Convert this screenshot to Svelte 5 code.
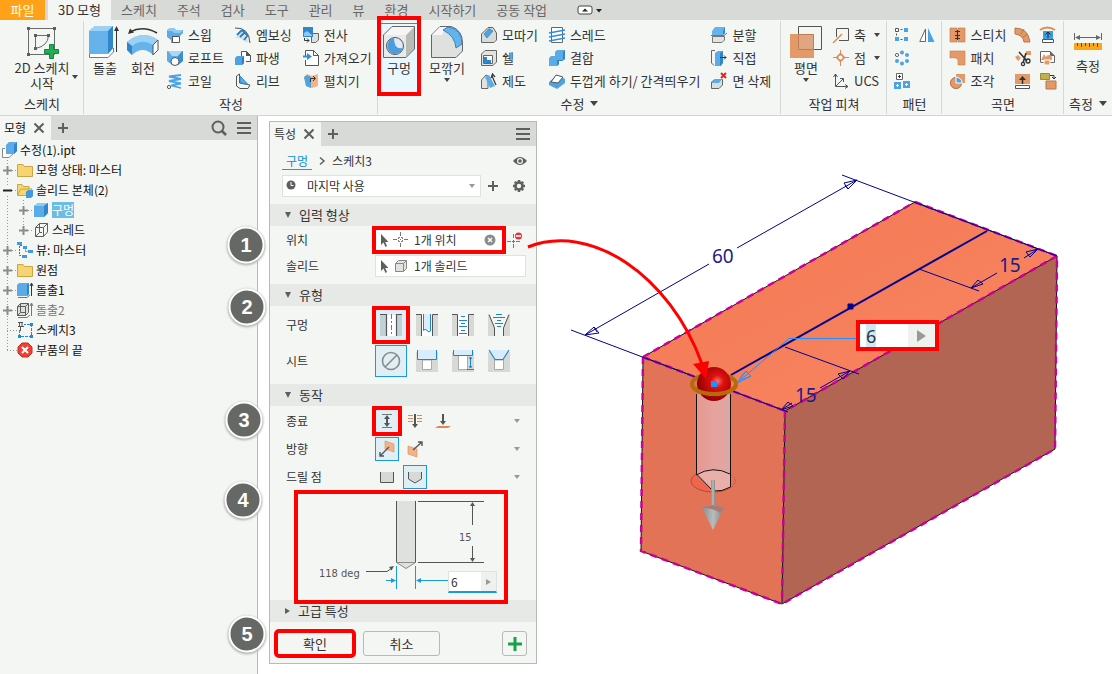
<script lang="ts">
	type Tool = { icon: string; label?: string; name?: string; menu?: boolean };
	type Panel = {
		id: string;
		title: string;
		menu?: boolean;
		large: (Tool & { marked?: boolean })[];
		columns: Tool[][];
	};
	type Node = {
		icon: string;
		label: string;
		toggle?: "plus" | "minus";
		selected?: boolean;
		muted?: boolean;
		children?: Node[];
	};

	const tabs = ["스케치", "주석", "검사", "도구", "관리", "뷰", "환경", "시작하기", "공동 작업"];

	const panels: Panel[] = [
		{
			id: "sketch",
			title: "스케치",
			large: [{ icon: "sketch", label: "2D 스케치\n시작", menu: true }],
			columns: [],
		},
		{
			id: "create",
			title: "작성",
			large: [
				{ icon: "extrude", label: "돌출" },
				{ icon: "revolve", label: "회전" },
			],
			columns: [
				[
					{ icon: "sweep", label: "스윕" },
					{ icon: "loft", label: "로프트" },
					{ icon: "coil", label: "코일" },
				],
				[
					{ icon: "emboss", label: "엠보싱" },
					{ icon: "derive", label: "파생" },
					{ icon: "rib", label: "리브" },
				],
				[
					{ icon: "decal", label: "전사" },
					{ icon: "import", label: "가져오기" },
					{ icon: "unwrap", label: "펼치기" },
				],
			],
		},
		{
			id: "modify",
			title: "수정",
			menu: true,
			large: [
				{ icon: "hole", label: "구멍", marked: true },
				{ icon: "fillet", label: "모깎기", menu: true },
			],
			columns: [
				[
					{ icon: "chamfer", label: "모따기" },
					{ icon: "shell", label: "쉘" },
					{ icon: "draft", label: "제도" },
				],
				[
					{ icon: "thread", label: "스레드" },
					{ icon: "combine", label: "결합" },
					{ icon: "thicken", label: "두껍게 하기/ 간격띄우기" },
				],
				[
					{ icon: "split", label: "분할" },
					{ icon: "direct", label: "직접" },
					{ icon: "deleteFace", label: "면 삭제" },
				],
			],
		},
		{
			id: "work",
			title: "작업 피쳐",
			large: [{ icon: "plane", label: "평면", menu: true }],
			columns: [
				[
					{ icon: "axis", label: "축", menu: true },
					{ icon: "point", label: "점", menu: true },
					{ icon: "ucs", label: "UCS" },
				],
			],
		},
		{
			id: "pattern",
			title: "패턴",
			large: [],
			columns: [
				[
					{ icon: "rectPattern", name: "직사각형 패턴" },
					{ icon: "circPattern", name: "원형 패턴" },
					{ icon: "sketchPattern", name: "스케치 연계 패턴" },
				],
				[{ icon: "mirror", name: "미러" }],
			],
		},
		{
			id: "surface",
			title: "곡면",
			large: [],
			columns: [
				[
					{ icon: "stitch", label: "스티치" },
					{ icon: "patch", label: "패치" },
					{ icon: "sculpt", label: "조각" },
				],
				[
					{ icon: "ruled", name: "직선보간 곡면" },
					{ icon: "trim", name: "자르기" },
					{ icon: "extend", name: "연장" },
				],
				[
					{ icon: "replace", name: "면 대체" },
					{ icon: "repair", name: "본체 복구" },
					{ icon: "fit", name: "메쉬 면 맞춤" },
				],
			],
		},
		{
			id: "measure",
			title: "측정",
			menu: true,
			large: [{ icon: "measure", label: "측정" }],
			columns: [],
		},
	];

	const tree: Node[] = [
		{ icon: "folder", label: "모형 상태: 마스터", toggle: "plus" },
		{
			icon: "bodies",
			label: "솔리드 본체(2)",
			toggle: "minus",
			children: [
				{ icon: "solid", label: "구멍", toggle: "plus", selected: true },
				{ icon: "wire", label: "스레드", toggle: "plus" },
			],
		},
		{ icon: "views", label: "뷰: 마스터", toggle: "plus" },
		{ icon: "folder", label: "원점", toggle: "plus" },
		{ icon: "extrusion", label: "돌출1", toggle: "plus" },
		{ icon: "extrusionOff", label: "돌출2", toggle: "plus", muted: true },
		{ icon: "sketchNode", label: "스케치3" },
		{ icon: "end", label: "부품의 끝" },
	];

	const holeTypes = [
		{ icon: "simpleHole", name: "단순 구멍" },
		{ icon: "clearanceHole", name: "틈새 구멍" },
		{ icon: "tappedHole", name: "탭 구멍" },
		{ icon: "taperHole", name: "테이퍼 탭 구멍" },
	];
	const seats = [
		{ icon: "noSeat", name: "없음" },
		{ icon: "counterbore", name: "카운터보어" },
		{ icon: "spotface", name: "접촉 공간" },
		{ icon: "countersink", name: "카운터싱크" },
	];
	const behaviors = [
		{
			label: "종료",
			marked: true,
			options: [
				{ icon: "distance", name: "거리" },
				{ icon: "throughAll", name: "전체 관통" },
				{ icon: "toFace", name: "지정 면까지" },
			],
		},
		{
			label: "방향",
			options: [
				{ icon: "dirDefault", name: "기본값" },
				{ icon: "dirFlipped", name: "반전" },
			],
		},
		{
			label: "드릴 점",
			options: [
				{ icon: "flat", name: "플랫" },
				{ icon: "angle", name: "각도" },
			],
		},
	];

	const steps = [
		{ n: 1, x: 246, y: 129 },
		{ n: 2, x: 247, y: 191 },
		{ n: 3, x: 244, y: 304 },
		{ n: 4, x: 243, y: 384 },
		{ n: 5, x: 247, y: 518 },
	];

	let holeType = $state(0);
	let seat = $state(0);
	let picked = $state([0, 0, 1]);
	let diameter = $state("6");

	const cube = `<path d="M1 4 5 1H15V11L11 15H1Z" fill="#5aabe8"/><path d="M1 4 5 1H15L11 4Z" fill="#8fcaf5"/><path d="M11 4 15 1V11L11 15Z" fill="#2f86cb"/>`;
	const wire = `<path d="M2.500 5.500 6.500 1.500H14.500V10L10.500 14.500H2.500ZM2.500 5.500H10.500V14.500M10.500 5.500 14.500 1.500M6.500 1.500V10.500L2.500 14.500M6.500 10.500H9" fill="none" stroke="#5c5f5c"/>`;
	const folder = `<path d="M.5 2.500H6L7.500 4.500H15.500V14.500H.5Z" fill="#f6d571" stroke="#c9a545"/>`;
	const bore = `<path d="M0 1H7V22H0ZM16 1H22V22H16Z" fill="#d7d9d6"/>`;

	// 16 x 16 unless listed in `sizes`
	const icons: Record<string, string> = {
		sketch: `<path d="M2.500 2.500H28.500V28.500H2.500ZM9.500 22.500V9.500H22.500Q22 20 9.500 22.500" fill="none" stroke="#6a6c6a"/><path d="M1 1h3v3H1ZM27 1h3v3h-3ZM1 27h3v3H1ZM8 8h3v3H8ZM21 8h3v3h-3ZM8 21h3v3H8Z" fill="#5c5f5c"/><path d="M23.500 18.500h4v5h5v4h-5v5h-4v-5h-5v-4h5Z" fill="#1fb052" stroke="#0d8a3c"/>`,
		extrude: `<path d="M.5 27V31.500H19L24.500 26V22" fill="#fff" stroke="#777"/><path d="M0 5 6 0H24V22L19 28H0Z" fill="#66b3ec"/><path d="M0 5 6 0H24L19 5Z" fill="#9bd1f6"/><path d="M19 5 24 0V22L19 28Z" fill="#2f86cb"/><path d="M27.500 26V3" stroke="#333"/><path d="M27.500 0 25 5H30Z" fill="#333"/>`,
		revolve: `<path d="M0 16Q15 3 31 14V24L26 29Q16 19 5 29L0 24Z" fill="#66b3ec"/><path d="M0 16Q15 3 31 14L26 19Q15 12 5 20Z" fill="#9bd1f6"/><path d="M26 19 31 14V24L26 29Z" fill="#fff" stroke="#555"/><path d="M0 16 5 20V29L0 24Z" fill="#2f86cb"/><path d="M3 6Q16-1 30 7" fill="none" stroke="#333" stroke-width="1.500"/><path d="M1 8 3 2.500 7 6.500Z" fill="#333"/>`,
		sweep: `<path d="M0 3 3 1H7L9 3H16V6L13 9H11V16H4V13L0 10Z" fill="#5aabe8"/><path d="M0 4 3 1H7L9 3H16L13 6H7L5 4Z" fill="#8fcaf5"/><path d="M5.500 9.500H12.500V15.500H5.500Z" fill="#fff" stroke="#555"/>`,
		loft: `<path d="M0 1H16V11L11 15H5L0 11Z" fill="#5aabe8"/><path d="M1 1H15L11 6H5Z" fill="#a8d8f8"/><path d="M16 1V11L11 15V6Z" fill="#3a8fd0"/><circle cx="8" cy="11.500" r="4" fill="#fff" stroke="#555"/>`,
		coil: `<path d="M14 2 2 3.500 14 6 2 8 14 10.500 4 12.500 14 15" fill="none" stroke="#4ba3e3" stroke-width="1.800" stroke-linejoin="bevel"/><circle cx="2" cy="14" r="1.600" fill="#fff" stroke="#555"/>`,
		emboss: `<path d="M0 1Q14 0 15 16" fill="none" stroke="#555"/><path d="M0 11 8 4 14 15H10Q7 11 0 11Z" fill="#dfe1df"/><path d="M2 8 7 3M5 10 10 5M9 13 13 8M7 3 13 9" fill="none" stroke="#1c7fc8" stroke-width="1.800"/>`,
		derive: `<path d="M6.500 6V1.500H11.500L15.500 5.500V11.500H11" fill="#fff" stroke="#555"/><path d="M11 1V6H16Z" fill="#555"/><path d="M0 8 2 6H9V13L7 15H0Z" fill="#4ba3e3"/><path d="M7 8 9 6V13L7 15Z" fill="#2f7fc0"/>`,
		rib: `<path d="M1.500 3 4.500 1V10L15 12 13 15.500H5L1.500 13Z" fill="#f5f5f5" stroke="#555"/><path d="M5 3 13 11.500 5 9.500Z" fill="#5aabe8" stroke="#2f86cb"/>`,
		decal: `<path d="M8.500 6.500H15.500V13L12.500 15.500H8.500Z" fill="#dfe1df" stroke="#666"/><path d="M0 0H10V10H0Z" fill="#2f86cb"/><path d="M1 6 4 4 9 8V9H1Z" fill="#8fcaf5"/><path d="M1.500 11V13.500H6M4 11.500 6 13.500 4 15.500" fill="none" stroke="#333"/>`,
		import: `<path d="M2.500 6V.5H10.500L15.500 5.500V15.500H2.500V10" fill="#fff" stroke="#555"/><path d="M10.500 .5V5.500H15.500" fill="none" stroke="#555"/><path d="M0 5.500H4V3L9 6.500 4 10V7.500H0Z" fill="#2f8ee0"/>`,
		unwrap: `<path d="M1 4 4 1 9 3 15 1V13L9 15 3 13Z" fill="#f0b48a"/><path d="M1 4 4 2 8 4V15L3 13Z" fill="#4ba3e3"/><path d="M7.500 9V5.500H12M10 3 12.500 5.500 10 8" fill="none" stroke="#333"/>`,
		hole: `<path d="M1 9 9 1H31V23L23 31H1Z" fill="#e9eae8"/><path d="M23 9 31 1V23L23 31Z" fill="#b9bbb9"/><path d="M1 9 9 1H31L23 9Z" fill="#f5f5f4"/><path d="M.5 9 9 .5H31.500V23L23 31.500H.5Z" fill="none" stroke="#666"/><circle cx="12" cy="20" r="8.500" fill="#dcebf5" stroke="#555"/><path d="M6 15A8 8 0 1 0 20 22Q11 24 11 12Q7 12 6 15Z" fill="#4b9ddb"/>`,
		fillet: `<path d="M.5 9 9 .5H20Q31.500 4 31.500 17V25L25 31.500H.5Z" fill="#dfe1df" stroke="#666"/><path d="M1 9 9 1H15L11 9Z" fill="#f7f7f7"/><path d="M12 4 17 1Q31 3 31 18L25 22Q24 10 12 4Z" fill="#66b3ec" stroke="#2f86cb"/>`,
		chamfer: `<path d="M.5 7 7 .5H12L15.500 6V13L13 15.500H.5Z" fill="#d9dbd9" stroke="#666"/><path d="M3 7 8 1.500 12 4 6 11Z" fill="#4ba3e3" stroke="#2777b5" stroke-width=".6"/>`,
		shell: `<path d="M.5 4 4 .5H15.500V12L12 15.500H.5Z" fill="#e2e3e1" stroke="#666"/><path d="M2.500 5.500H11.500V13.500H2.500Z" fill="#fff" stroke="#666"/><path d="M3 7H6V10H10V13H3Z" fill="#2f86cb"/>`,
		draft: `<path d="M.5 15.500V7L5 2 7 3V15.500Z" fill="#e2e3e1" stroke="#666"/><path d="M4 4 8 2 14 13 9 15Z" fill="#5aabe8"/><path d="M11 3 15 12M10 5 11.500 1 14 4" fill="none" stroke="#333" stroke-width="1.200"/>`,
		thread: `<path d="M2.500 .5H13.500V15.500H2.500Z" fill="#fff" stroke="#666"/><path d="M0 6 16 3M0 10 16 7M0 14 16 11" stroke="#2f8ee0" stroke-width="1.400"/>`,
		combine: `<path d="M0 8 2 6H6V2L8 0H16V9L13 11H10V14L8 16H0Z" fill="#5aabe8"/><path d="M14 2 16 0V9L13 11H10V14L8 16V10H14Z" fill="#2f86cb"/>`,
		thicken: `<path d="M0 9 8 2 16 6V10L8 16 0 12Z" fill="#4ba3e3"/><path d="M2 9 7 2 14 4 9 10Z" fill="#fff" stroke="#555"/>`,
		split: `<path d="M1 4 4 0H14V6L12 8H1Z" fill="#66b3ec"/><path d="M12 4 14 0V6L12 8Z" fill="#2f86cb"/><path d="M1.500 9.500H13.500V13L11 15.500H1.500Z" fill="#e2e3e1" stroke="#777"/><path d="M0 8.500H13L16 6" fill="none" stroke="#1c8ee0"/>`,
		direct: `<path d="M4 .5H.5V13L3 15.500" fill="none" stroke="#666"/><path d="M4 3 7 1H12V13L10 16H4Z" fill="#5aabe8"/><path d="M9 3 12 1V13L9 16Z" fill="#2f86cb"/><path d="M9 7.500H15M13 5.500 15 7.500 13 9.500" fill="none" stroke="#333"/>`,
		deleteFace: `<path d="M.5 15.500V9L4 6.500H11.500V12L8 15.500Z" fill="#dcdedc" stroke="#666"/><path d="M1 9 4 6H11L8 10H1Z" fill="#5aabe8"/><path d="M10 0 15 5M15 0 10 5" stroke="#f0201c" stroke-width="2"/>`,
		plane: `<path d="M8.500 .5H31.500V23.500H8.500Z" fill="none" stroke="#555"/><path d="M0 8H24V32H0Z" fill="#e39a68"/><path d="M8.500 8.500H23.500V23.500H8.500Z" fill="#dfa681" stroke="#c07c50"/>`,
		axis: `<path d="M3.500 10V1.500H15.500V13.500H6" fill="none" stroke="#555"/><path d="M0 16 9 7" stroke="#e08a4e" stroke-width="1.500"/>`,
		point: `<path d="M7.500 0V16M0 7.500H16" stroke="#d98c5c"/><path d="M7.500 2.500 12.500 7.500 7.500 12.500 2.500 7.500Z" fill="#d98c5c"/><circle cx="7.500" cy="7.500" r="2" fill="#fff"/>`,
		ucs: `<path d="M2.500 1V13.500H15M3 13 10 6M.5 4 2.500 1 4.500 4M12 11.500 15 13.500 12 15.500M7 5.500H10.500V9" fill="none" stroke="#555"/>`,
		rectPattern: `<path d="M2.500 2.500H12.500M2.500 2.500V13.500M2.500 12.500H12" stroke="#555" stroke-dasharray="2" fill="none"/><path d="M1.500 1.500h3v3h-3Z" fill="#fff" stroke="#555"/><path d="M10 1h4v4h-4ZM10 10h4v4h-4ZM1 10h4v4H1Z" fill="#4ba3e3"/>`,
		circPattern: `<g fill="#4ba3e3"><circle cx="8" cy="2.500" r="2"/><circle cx="13" cy="5" r="2"/><circle cx="13" cy="11" r="2"/><circle cx="8" cy="13.500" r="2"/><circle cx="3" cy="11" r="2"/></g><circle cx="3" cy="5" r="1.600" fill="#fff" stroke="#666"/>`,
		sketchPattern: `<path d="M2.500 .5h6v6h-6Z" fill="#fff" stroke="#666"/><path d="M0 9h7v7H0ZM9 8h7v7H9Z" fill="#4ba3e3"/><path d="M5.500 2V5M4 3.500H7" stroke="#333"/><path d="M3.500 11v3M2 12.500h3M12.500 10v3M11 11.500h3" stroke="#fff"/>`,
		mirror: `<path d="M6.500 2V14.500H.8Z" fill="#fff" stroke="#666"/><path d="M9 1 15.500 15H9Z" fill="#4ba3e3"/>`,
		stitch: `<path d="M0 1H7V15H0ZM8 1H15V15H8Z" fill="#e39a68" stroke="#b9764a" stroke-width=".6"/><path d="M5 4.500H10M5 8.500H10M5 11.500H10M7.500 3V13" stroke="#333"/>`,
		patch: `<path d="M0 1H15V15H8V10Q7 7 0 8Z" fill="#e39a68" stroke="#c07c50" stroke-width=".6"/>`,
		sculpt: `<path d="M6 1H15V10H12A6 6 0 1 1 6 4Z" fill="#e39a68"/><circle cx="6" cy="10" r="5.500" fill="#e39a68" stroke="#b9764a"/><path d="M6 4V10H12Q12 5 6 4Z" fill="#4ba3e3" stroke="#fff"/>`,
		ruled: `<path d="M0 1Q13 1 15 15H9Q8 8 0 7Z" fill="#e39a68" stroke="#b9764a"/><path d="M6 7 9 2M8 10 13 7" stroke="#b9764a"/>`,
		trim: `<path d="M11 1h5v4h-5ZM0 7l3-2 3 3-3 3Z" fill="#e39a68"/><path d="M4 2 12 11M11 3 8 13" stroke="#333" stroke-width="1.600"/><circle cx="13" cy="11" r="2" fill="none" stroke="#333" stroke-width="1.300"/><circle cx="8" cy="14" r="1.600" fill="none" stroke="#333" stroke-width="1.300"/>`,
		extend: `<path d="M0 1H15V11H0Z" fill="#e39a68"/><path d="M.5 12.500H14.500V15.500H.5Z" fill="#fff" stroke="#555"/><path d="M7.500 11V5" stroke="#333" stroke-width="1.500"/><path d="M4 7 7.500 3 11 7Z" fill="#333"/>`,
		replace: `<path d="M0 3Q7-2 15 3" fill="none" stroke="#e08a4e" stroke-width="2"/><path d="M3 4H13V12H3Z" fill="#3f9be0"/><path d="M2.500 12.500H13.500V15.500H2.500Z" fill="#fff" stroke="#555"/><path d="M8 11V6M5.500 7.500 8 5 10.500 7.500" fill="none" stroke="#222"/>`,
		repair: `<path d="M.5 12V1.500H10L14.500 6V12.500H.5" fill="#fff" stroke="#666"/><path d="M10 1V6H15Z" fill="#666"/><path d="M4 4 8 10H1Z" fill="#e39a68"/><circle cx="9" cy="8" r="3" fill="#e39a68"/><path d="M4 10h6v5H4Z" fill="#e39a68" stroke="#fff"/>`,
		fit: `<path d="M.5 .5H9.500V6.500H.5Z" fill="#c5ae4e" stroke="#9c8a38"/><path d="M6 8H16V16H6Z" fill="#e39a68" stroke="#b9764a"/><path d="M10 2.500H14V5M12 4 14 6 16 4" fill="none" stroke="#333"/>`,
		measure: `<path d="M1.500 7V14M28.500 7V14M3 11.500H27" stroke="#666"/><path d="M2 11.500 7 9V14ZM28 11.500 23 9V14Z" fill="#666"/><path d="M1 17H29V24H1Z" fill="#fba818"/><path d="M4.500 17v3M8.500 17v4M12.500 17v3M16.500 17v4M20.500 17v3M24.500 17v4" stroke="#6b4a10"/>`,
		part: `<path d="M4 6.500H1.500V15.500H8L12 12" fill="#fff" stroke="#888"/><path d="M5 3 8 0H16V9L13 12H5Z" fill="#5aabe8"/><path d="M13 3 16 0V9L13 12Z" fill="#2f86cb"/>`,
		folder,
		bodies: `<path d="M.5 2.500H5L6.500 4.500H12V6.500L15 7 12 13.500H.5Z" fill="#f6d571" stroke="#c9a545"/><path d="M.5 13 4 7H12" fill="none" stroke="#c9a545"/><path d="M9 10 11 8H16V14L14 16H9Z" fill="#3f9be0"/>`,
		solid: cube,
		wire,
		views: `<path d="M5 3.500H2.500V13.500H5M8.500 5.500V9.500H11" fill="none" stroke="#666" stroke-dasharray="2 1"/><path d="M0 0h5v3H0ZM11 8h5v3h-5ZM5 13h5v3H5ZM6 4h4v3H6Z" fill="#3f9be0"/>`,
		extrusion: `<path d="M0 3 2 1H12V12L10 14H0Z" fill="#5aabe8"/><path d="M10 3 12 1V12L10 14Z" fill="#2f86cb"/><path d="M1 15.500H10L13 13" fill="none" stroke="#777"/><path d="M14.500 14V2M13 4 14.500 1 16 4" fill="none" stroke="#333"/>`,
		extrusionOff: `<path d="M.5 4.500 3.500 1.500H11.500V10.500L8.500 13.500H.5ZM.5 4.500H8.500V13.500M8.500 4.500 11.500 1.500M3.500 1.500V10.500L.5 13.500M3.500 10.500H8.500" fill="#dddfdd" stroke="#5c5f5c"/><path d="M1 15.500H10L13 13M14.500 14V2M13 4 14.500 1 16 4" fill="none" stroke="#777"/>`,
		sketchNode: `<path d="M2.500 8V14.500H14.500V2.500H7" fill="none" stroke="#1c8ee0" stroke-dasharray="3 1"/><path d="M1 13h3v3H1ZM13 13h3v3h-3ZM13 1h3v3h-3Z" fill="#1c8ee0"/><path d="M1 .5H6M2.500 1V4M5 1V4M1 4.500H7M3.500 5V9" fill="none" stroke="#555"/>`,
		end: `<path d="M5 1H11L15 5V11L11 15H5L1 11V5Z" fill="#ee4036" stroke="#c92a22"/><path d="M5 5 11 11M11 5 5 11" stroke="#fff" stroke-width="2"/>`,
		close: `<path d="M3.500 3.500 12.500 12.500M12.500 3.500 3.500 12.500" stroke="#5c5f5c" stroke-width="2"/>`,
		add: `<path d="M8 3V13M3 8H13" stroke="#5c5f5c" stroke-width="2"/>`,
		burger: `<path d="M1 3H15M1 8H15M1 13H15" stroke="#5c5f5c" stroke-width="2"/>`,
		search: `<circle cx="7" cy="7" r="5.500" fill="none" stroke="#5c5f5c" stroke-width="2"/><path d="M11 11 15 15" stroke="#5c5f5c" stroke-width="2.500"/>`,
		eye: `<path d="M1 8Q8 0 15 8Q8 16 1 8Z" fill="#5c5f5c"/><circle cx="8" cy="8" r="3" fill="#f4f6f3"/><circle cx="8" cy="8" r="1.800" fill="#5c5f5c"/>`,
		gear: `<circle cx="8" cy="8" r="3.500" fill="none" stroke="#5c5f5c" stroke-width="2.500"/><path d="M8 2V4M8 12V14M2 8H4M12 8H14M3.800 3.800 5 5M11 11 12.200 12.200M12.200 3.800 11 5M5 11 3.800 12.200" stroke="#5c5f5c" stroke-width="2.500"/>`,
		clock: `<circle cx="8" cy="7" r="4.500" fill="#5c5f5c"/><path d="M8 4V7.500H10.500" fill="none" stroke="#fff"/>`,
		chevron: `<path d="M6 4.500 10 8 6 11.500" fill="none" stroke="#5c5f5c" stroke-width="1.500"/>`,
		cursor: `<path d="M5 2V13L7.500 10.500 9.500 15 11 14 9.200 10H12.500Z" fill="#5c5f5c"/>`,
		cross: `<path d="M7.500 0V4M7.500 11V15M0 7.500H4M11 7.500H15M7.500 7V8" stroke="#777"/><path d="M5.500 7V5.500H7M8 5.500H9.500V7M9.500 8V9.500H8M7 9.500H5.500V8" fill="none" stroke="#777"/>`,
		box: `<path d="M2.500 5.500 5.500 2.500H13.500V10.500L10.500 13.500H2.500Z" fill="#e2e3e1" stroke="#888"/><path d="M2.500 5.500H10.500V13.500M10.500 5.500 13.500 2.500" fill="none" stroke="#888"/>`,
		clear: `<circle cx="8" cy="8" r="5.500" fill="#8a8c8a"/><path d="M6 6 10 10M10 6 6 10" stroke="#fff" stroke-width="1.400"/>`,
		remove: `<path d="M6.500 2V6M6.500 12V16M0 9.500H4M9 9.500H13M6.500 8V11M5 9.500H8" stroke="#777"/><circle cx="11.500" cy="4" r="3.500" fill="#e8333a"/><path d="M9 4H14" stroke="#fff" stroke-width="1.600"/>`,
		simpleHole: `<path d="M0 1H7V22H0ZM16 1H22V22H16Z" fill="#c2d0d8"/><path d="M7 1H16V22H7Z" fill="#fff"/><path d="M0 .5H6.500V22M22 .5H16.500V22" fill="none" stroke="#555" stroke-width="1.200"/><path d="M11.500 0V22" stroke="#777" stroke-dasharray="5 2 2 2"/>`,
		clearanceHole: `${bore}<path d="M5 1H17V22H5Z" fill="#fff"/><path d="M0 .5H5.500V22M22 .5H16.500V22" fill="none" stroke="#555"/><path d="M7.500 0V16.500Q9 14 11 16.500T14.500 17V0" fill="#dcecf8" stroke="#1a86d0"/>`,
		tappedHole: `${bore}<path d="M6 1H17V22H6Z" fill="#fff"/><path d="M0 .5H5.500V22M22 .5H16.500V22" fill="none" stroke="#555"/><path d="M9 2.500H13M7 6.500H15M9 9.500H13M7 12.500H15M9 16.500H13M7 19.500H15" stroke="#1a86d0"/>`,
		taperHole: `<path d="M0 1V22H7V14L2 1ZM22 1V22H15V14L20 1Z" fill="#d7d9d6"/><path d="M1 .5 6.500 14V22M21 .5 15.500 14V22" fill="none" stroke="#555"/><path d="M8 .5H14M5 3.500H17M9 6.500H13M7 9.500H15M9 12.500H13" stroke="#1a86d0"/>`,
		noSeat: `<circle cx="11" cy="11" r="8.500" fill="none" stroke="#8a8c8a" stroke-width="1.600"/><path d="M17 5 5 17" stroke="#8a8c8a" stroke-width="1.600"/>`,
		counterbore: `<path d="M0 2H22V22H0Z" fill="#d7d9d6"/><path d="M6.500 10H15.500V19.500H6.500Z" fill="#fff" stroke="#aaa"/><path d="M1.500 0V9.500H20.500V0Z" fill="#d9ecfb"/><path d="M1.500 0V9.500H20.500V0" fill="none" stroke="#1a86d0"/>`,
		spotface: `<path d="M0 2H22V22H0Z" fill="#d7d9d6"/><path d="M6.500 5H15.500V19.500H6.500Z" fill="#fff" stroke="#aaa"/><path d="M1.500 0V5.500H20.500V0Z" fill="#d9ecfb"/><path d="M1.500 0V5.500H20.500V0M18.500 7V18M17 9 18.500 7 20 9M17 16 18.500 18 20 16M15 19.500H22" fill="none" stroke="#1a86d0"/>`,
		countersink: `<path d="M0 2H22V22H0Z" fill="#d7d9d6"/><path d="M6.500 10H15.500V19.500H6.500Z" fill="#fff" stroke="#aaa"/><path d="M1 0 7 9.500H15L21 0Z" fill="#d9ecfb"/><path d="M1 0 7 9.500H15L21 0" fill="none" stroke="#1a86d0" stroke-width="1.200"/>`,
		distance: `<path d="M3 1.500H13M3 14.500H13" stroke="#777"/><path d="M8 4V12" stroke="#555" stroke-width="2"/><path d="M8 2 11 6H5ZM8 14 11 10H5Z" fill="#555"/>`,
		throughAll: `<path d="M1 2.500H6M1 5.500H6M1 8.500H6M10 2.500H15M10 5.500H15M10 8.500H15" stroke="#e08a4e"/><path d="M8 1V12" stroke="#555" stroke-width="2"/><path d="M5 11H11L8 15Z" fill="#555"/>`,
		toFace: `<path d="M8 1V8" stroke="#555" stroke-width="2"/><path d="M5 8H11L8 12Z" fill="#555"/><path d="M0 15 3 13H16L13 15Z" fill="#e08a4e"/>`,
		dirDefault: `<path d="M6 0 15 3V11L6 8Z" fill="#f0b48a" stroke="#e08a4e" stroke-width=".6"/><path d="M1 15 10 6M1 11V15H5" fill="none" stroke="#555" stroke-width="1.400"/>`,
		dirFlipped: `<path d="M1 5 10 8V16L1 13Z" fill="#f0b48a" stroke="#e08a4e" stroke-width=".6"/><path d="M6 9 15 1M11 1H15V5" fill="none" stroke="#555" stroke-width="1.400"/>`,
		flat: `<path d="M1.500 3V13.500H14.500V3Z" fill="#d7d9d6"/><path d="M1.500 3V13.500H14.500V3" fill="none" stroke="#555"/>`,
		angle: `<path d="M1.500 3V10L8 14 14.500 10V3Z" fill="#d7d9d6"/><path d="M1.500 3V10L8 14 14.500 10V3" fill="none" stroke="#555"/>`,
		apply: `<path d="M8 1V15M1 8H15" stroke="#18a04a" stroke-width="3"/>`,
	};
	const sizes: Record<string, number> = {
		sketch: 32,
		extrude: 32,
		revolve: 32,
		hole: 32,
		fillet: 32,
		plane: 32,
		measure: 30,
		simpleHole: 22,
		clearanceHole: 22,
		tappedHole: 22,
		taperHole: 22,
		noSeat: 22,
		counterbore: 22,
		spotface: 22,
		countersink: 22,
	};
</script>

{#snippet icon(name: string)}
	{@const size = sizes[name] ?? 16}
	<svg class="icon" width={size} height={size} viewBox="0 0 {size} {size}" aria-hidden="true">
		{@html icons[name]}
	</svg>
{/snippet}

{#snippet node(item: Node)}
	<li>
		<div class="row">
			{#if item.toggle}
				<button class="toggle" type="button" aria-label="{item.label} 펼치기">
					<svg width="9" height="9" viewBox="0 0 9 9">
						{#if item.toggle === "plus"}
							<path d="M4.500 0V9M0 4.500H9" stroke="#8a8c8a" stroke-width="2" />
						{:else}
							<path d="M0 4.500H9" stroke="#222" stroke-width="2" />
						{/if}
					</svg>
				</button>
				<span class="dots"></span>
			{:else}
				<span class="dots long"></span>
			{/if}
			{@render icon(item.icon)}
			<span class="name" class:selected={item.selected} class:muted={item.muted}>{item.label}</span>
		</div>
		{#if item.children}
			<ul>
				{#each item.children as child}
					{@render node(child)}
				{/each}
			</ul>
		{/if}
	</li>
{/snippet}

<div class="app">
	<nav class="tabs">
		<button class="file" type="button">파일</button>
		<button class="current" type="button">3D 모형</button>
		{#each tabs as tab}
			<button type="button">{tab}</button>
		{/each}
		<button class="collapse" type="button" aria-label="리본 최소화">
			<svg width="26" height="10" viewBox="0 0 26 10">
				<rect x="1" y="1" width="14" height="8" rx="2" fill="#fff" stroke="#444" />
				<path d="M5 6.500 8 3.500 11 6.500Z" fill="#222" />
				<path d="M19 4H25L22 7.500Z" fill="#222" />
			</svg>
		</button>
	</nav>

	<div class="ribbon">
		{#each panels as panel}
			<section class="panel {panel.id}">
				<div class="tools">
					{#if panel.large.length}
						<div class="larges">
							{#each panel.large as tool}
								<button class="large" class:marked={tool.marked} type="button">
									{@render icon(tool.icon)}
									<span>{tool.label}</span>
									{#if tool.menu}<i class="caret"></i>{/if}
								</button>
							{/each}
						</div>
					{/if}
					{#each panel.columns as column}
						<div class="column">
							{#each column as tool}
								<button class="small" type="button" aria-label={tool.name}>
									{@render icon(tool.icon)}
									{#if tool.label}<span>{tool.label}</span>{/if}
									{#if tool.menu}<i class="caret"></i>{/if}
								</button>
							{/each}
						</div>
					{/each}
				</div>
				<h2>{panel.title}{#if panel.menu}<i class="caret wide"></i>{/if}</h2>
			</section>
		{/each}
	</div>

	<div class="workspace">
		<aside>
			<div class="bar">
				<div class="tab">모형 <button type="button" aria-label="모형 닫기">{@render icon("close")}</button></div>
				<button type="button" aria-label="패널 추가">{@render icon("add")}</button>
				<span class="spacer"></span>
				<button type="button" aria-label="검색">{@render icon("search")}</button>
				<button type="button" aria-label="메뉴">{@render icon("burger")}</button>
			</div>
			<div class="root">{@render icon("part")}<span class="name">수정(1).ipt</span></div>
			<ul class="tree">
				{#each tree as item}
					{@render node(item)}
				{/each}
			</ul>
		</aside>

		<main>
			<form class="properties" onsubmit={(e) => e.preventDefault()}>
				<div class="bar">
					<div class="tab">특성 <button type="button" aria-label="특성 닫기">{@render icon("close")}</button></div>
					<button type="button" aria-label="패널 추가">{@render icon("add")}</button>
					<span class="spacer"></span>
					<button type="button" aria-label="메뉴">{@render icon("burger")}</button>
				</div>
				<div class="crumbs">
					<a href="#hole">구멍</a>
					{@render icon("chevron")}
					<span>스케치3</span>
					<span class="spacer"></span>
					<button type="button" aria-label="미리보기">{@render icon("eye")}</button>
				</div>
				<div class="preset">
					<div class="field">
						{@render icon("clock")}
						<select aria-label="사전 설정">
							<option>마지막 사용</option>
						</select>
						<i class="caret pale"></i>
					</div>
					<button type="button" aria-label="사전 설정 추가">{@render icon("add")}</button>
					<button type="button" aria-label="설정">{@render icon("gear")}</button>
				</div>

				<h3><i class="caret"></i>입력 형상</h3>
				<div class="group">
					<div class="line">
						<label for="position">위치</label>
						<div class="field pick marked">
							{@render icon("cursor")}
							{@render icon("cross")}
							<input id="position" value="1개 위치" readonly />
							<button type="button" aria-label="선택 지우기">{@render icon("clear")}</button>
						</div>
						<button class="remove" type="button" aria-label="점 제외">{@render icon("remove")}</button>
					</div>
					<div class="line">
						<label for="solid">솔리드</label>
						<div class="field pick full">
							{@render icon("cursor")}
							{@render icon("box")}
							<input id="solid" value="1개 솔리드" readonly />
						</div>
					</div>
				</div>

				<h3><i class="caret"></i>유형</h3>
				<div class="group">
					<div class="line">
						<span class="label">구멍</span>
						{#each holeTypes as type, i}
							<button
								class="choice big"
								class:marked={i === 0}
								type="button"
								aria-label={type.name}
								aria-pressed={holeType === i}
								onclick={() => (holeType = i)}>{@render icon(type.icon)}</button
							>
						{/each}
					</div>
					<div class="line">
						<span class="label">시트</span>
						{#each seats as type, i}
							<button
								class="choice big"
								type="button"
								aria-label={type.name}
								aria-pressed={seat === i}
								onclick={() => (seat = i)}>{@render icon(type.icon)}</button
							>
						{/each}
					</div>
				</div>

				<h3><i class="caret"></i>동작</h3>
				<div class="group behavior">
					{#each behaviors as behavior, row}
						<div class="line">
							<span class="label">{behavior.label}</span>
							{#each behavior.options as option, i}
								<button
									class="choice"
									class:marked={behavior.marked && i === 0}
									type="button"
									aria-label={option.name}
									aria-pressed={picked[row] === i}
									onclick={() => (picked[row] = i)}>{@render icon(option.icon)}</button
								>
							{/each}
							<span class="spacer"></span>
							<i class="caret pale"></i>
						</div>
					{/each}
				</div>

				<div class="drill marked">
					<svg width="206" height="106" viewBox="298 494 206 106">
						<path d="M396 501H416V562L406 569 396 562Z" fill="#dfe1de" />
						<path d="M396.500 501V562.500M415.500 501V562.500" stroke="#555" />
						<path d="M396.500 562.500H415.500M396.500 562.500 406 568.500 415.500 562.500" fill="none" stroke="#8a8c8a" />
						<path d="M418 501.500H484M418 562.500H484M472.500 503V525M472.500 546V561" stroke="#555" />
						<path d="M472.500 502 475 506H470ZM472.500 562 475 558H470ZM394 566 391.500 570.500 389 567Z" fill="#555" />
						<path d="M366 571.500H387L392 568" fill="none" stroke="#555" />
						<path d="M396.500 566V589M415.500 566V589M386 580.500H394M418 580.500H448" stroke="#1a9ad9" />
						<path d="M396 580.500 391 578V583ZM416 580.500 421 578V583Z" fill="#1a9ad9" />
						<text x="459" y="541">15</text>
						<text x="319" y="577">118 deg</text>
					</svg>
					<div class="entry">
						<input aria-label="지름" bind:value={diameter} />
						<button type="button" aria-label="값 메뉴"><i class="play"></i></button>
					</div>
				</div>

				<h3><i class="play dark"></i>고급 특성</h3>
				<div class="actions">
					<button class="marked" type="submit">확인</button>
					<button type="button">취소</button>
					<span class="spacer"></span>
					<button class="apply" type="button" aria-label="적용">{@render icon("apply")}</button>
				</div>
			</form>

			<svg class="scene" width="575" height="558" viewBox="537 116 575 558" role="img" aria-label="구멍 미리보기">
				<defs>
					<linearGradient id="top" x2="1" y2="1">
						<stop offset="0.3" stop-color="#f47c57" />
						<stop offset="0.6" stop-color="#f7805d" />
					</linearGradient>
					<linearGradient id="bore">
						<stop offset="0" stop-color="#e5978f" />
						<stop offset="0.5" stop-color="#e6a29d" />
						<stop offset="1" stop-color="#dca8a3" />
					</linearGradient>
					<radialGradient id="ball" cx="0.6" cy="0.42" r="0.6">
						<stop offset="0" stop-color="#ff7070" />
						<stop offset="0.3" stop-color="#e01010" />
						<stop offset="1" stop-color="#900000" />
					</radialGradient>
					<linearGradient id="steel">
						<stop offset="0" stop-color="#8c8c8c" />
						<stop offset="0.5" stop-color="#b8bcbc" />
						<stop offset="1" stop-color="#858585" />
					</linearGradient>
				</defs>
				<path d="M643 357 915 202 1057 256 785 411Z" fill="url(#top)" />
				<path d="M643 357 785 411 782 604 641 551Z" fill="#e27356" />
				<path d="M785 411 1057 256 1055 449 782 604Z" fill="#b36553" />
				<g class="edges">
					<path d="M643 357 915 202 1057 256 785 411ZM643 357 641 551 782 604 1055 449 1057 256M785 411 782 604" stroke="#111" />
					<path d="M643 357 915 202M1057 256 785 411M643 357 641 551 782 604 1055 449 1057 256M785 411 782 604M915 202 1057 256M643 357 785 411" stroke="#c8009a" stroke-width="2.500" stroke-dasharray="7 5" />
				</g>
				<g class="dims">
					<path d="M571 330 788 412M842 175 1057 256" />
					<path d="M585 335 709 264M737 248 857 180" />
					<path d="M585 335 594 327 599 333ZM857 180 848 189 844 183ZM594 327 597 332M848 189 845 185" />
					<path d="M919 269 979 291M971 288 997 273M1024 258 1038 249M971 288 978 280 983 284ZM1038 249 1030 257 1026 252Z" />
					<path d="M785 347 859 374M820 388 850 371M850 371 843 379 838 374ZM781 410 792 403M781 410 788 402 793 406Z" />
					<path d="M731 375 987 231" stroke-width="2" />
					<path d="M848 304h5v5h-5Z" fill="#000090" />
					<text x="712" y="263">60</text>
					<text x="999" y="272">15</text>
					<text x="795" y="402">15</text>
				</g>
				<path d="M858 338.500H789L737 383M737 383 746 371 751 376ZM746 371 740 378M751 376 742 380" class="leader" />
				<ellipse cx="713" cy="481" rx="22" ry="11" fill="#f0654d" stroke="#b04a3c" />
				<path d="M730 473Q735 477 735 481Q735 488 722 491L730 487Z" fill="#e27356" />
				<path d="M696 394H731V486Q724 492 713 491L696 474Z" fill="url(#bore)" />
				<path d="M696 474Q713 465 730 474V487Q722 492 713 491Z" fill="#ebafa9" />
				<path d="M696.500 394V474L713 491Q722 492 730.500 487V394M696 475Q713 465 730 474" fill="none" stroke="#111" />
				<path d="M711 480H715V510H711Z" fill="url(#steel)" />
				<path d="M702 508Q713 502 724 508L713 530Z" fill="url(#steel)" />
				<path d="M702 508Q713 502 724 508L720 513Q713 508 702 508" fill="#a87c76" />
				<ellipse cx="714" cy="384" rx="22" ry="10" class="ring" />
				<circle cx="714" cy="384" r="17" fill="url(#ball)" />
				<path d="M692 384A22 10 0 0 0 736 384" class="ring" />
				<path d="M711 381h6v6h-6Z" fill="#1e8fff" />
				<path d="M528 247C590 222 670 275 702 364" fill="none" stroke="#f00" stroke-width="3" />
				<path d="M693 364 709 361 706 379Z" fill="#f00" />
			</svg>

			<div class="value marked">
				<input aria-label="구멍 지름" bind:value={diameter} />
				<button type="button" aria-label="값 메뉴"><i class="play"></i></button>
			</div>
		</main>

		{#each steps as step}
			<span class="step" style:left="{step.x}px" style:top="{step.y}px">{step.n}</span>
		{/each}
	</div>
</div>

<style>
	:global(body) {
		margin: 0;
	}

	.app {
		--chrome: #d8dad7;
		--surface: #f4f6f3;
		--line: #b8bab7;
		--accent: #1a9ad9;

		display: flex;
		flex-direction: column;
		min-height: 100vh;
		background: #fff;
		color: #333;
		font: 13px/16px "Noto Sans CJK KR", sans-serif;
		white-space: nowrap;
	}

	button,
	input,
	select {
		margin: 0;
		padding: 0;
		border: 0;
		background: none;
		color: inherit;
		font: inherit;
	}

	input,
	select {
		min-width: 0;
		outline: none;
		appearance: none;
	}

	h2,
	h3,
	ul {
		margin: 0;
		padding: 0;
		font: inherit;
		list-style: none;
	}

	.icon {
		display: block;
		flex: none;
		overflow: visible;
	}

	.spacer {
		flex: 1;
	}

	.marked {
		position: relative;
		z-index: 1;
		outline: 4px solid #f00;
	}

	.caret {
		flex: none;
		border: 3px solid transparent;
		border-top: 4px solid #444;
		border-bottom: 0;

		&.wide {
			border-width: 5px 4px 0;
		}

		&.pale {
			border-top-color: #999;
		}
	}

	.play {
		border: 3px solid transparent;
		border-left: 5px solid #999;
		border-right: 0;

		&.dark {
			border-left-color: #5c5f5c;
		}
	}

	.tabs {
		display: flex;
		height: 20px;
		background: var(--chrome);
		color: #666;

		button {
			padding: 0 10px;
		}

		.file {
			width: 45px;
			margin-right: 3px;
			background: #ffa219;
			color: #fff;
		}

		.current {
			background: var(--surface);
			color: #333;
		}

		.collapse {
			padding: 0 20px;
		}

		svg {
			display: block;
		}
	}

	.ribbon {
		display: grid;
		grid-template-columns: 84fr 294fr 403fr 106fr 55fr 122fr 48fr;
		border-bottom: 1px solid #d3d5d2;
		background: var(--surface);
	}

	.panel {
		display: flex;
		flex-direction: column;
		min-width: 0;
		background: linear-gradient(#d6d8d5, #d6d8d5) no-repeat 100% 1px / 1px 93px;

		&:last-child {
			background: none;
		}

		h2 {
			display: flex;
			align-items: center;
			justify-content: center;
			gap: 6px;
			height: 23px;
		}
	}

	.tools {
		display: flex;
		justify-content: center;
		gap: 9px;
		height: 72px;
	}

	.larges {
		display: flex;
		gap: 2px;

		.create & {
			margin-right: -5px;
		}

		.modify & {
			gap: 12px;
			margin-right: 5px;
		}
	}

	.create .tools,
	.modify .tools {
		gap: 11px;
		justify-content: flex-start;
		padding-left: 3px;
	}

	.large {
		display: flex;
		flex-direction: column;
		align-items: center;
		min-width: 36px;
		height: 72px;
		padding-top: 6px;

		span {
			margin-top: 2px;
			line-height: 15px;
			white-space: pre;
		}

		.caret {
			margin-top: 3px;
		}

		.sketch & .caret {
			align-self: flex-end;
			margin: -15px -9px 0 0;
		}

		&.marked {
			background: linear-gradient(transparent 3px, var(--accent) 3px 4px, #e9f8ff 4px);
		}
	}

	.column {
		display: flex;
		flex-direction: column;
		padding-top: 3px;
	}

	.small {
		display: flex;
		align-items: center;
		gap: 5px;
		height: 24px;

		.caret {
			margin-left: 3px;
		}
	}

	.workspace {
		position: relative;
		display: flex;
		flex: 1;
	}

	aside {
		flex: none;
		width: 257px;
		border-right: 1px solid var(--line);
		background: var(--surface);
		color: #111;
		font-size: 12px;
	}

	.bar {
		display: flex;
		align-items: center;
		gap: 9px;
		height: 24px;
		padding-right: 5px;
		background: var(--chrome);
		font-size: 12px;

		.tab {
			display: flex;
			align-items: center;
			align-self: stretch;
			gap: 5px;
			margin-right: -5px;
			padding: 0 4px;
			background: var(--surface);
		}
	}

	.root,
	.row {
		display: flex;
		align-items: center;
		gap: 3px;
		height: 20px;
	}

	.root {
		padding-left: 1px;
	}

	ul {
		background: repeating-linear-gradient(#999 0 1px, transparent 1px 3px) no-repeat 7px 0 / 1px calc(100% - 10px);
	}

	.row {
		padding-left: 3px;

		.icon {
			margin-left: -3px;
		}
	}

	li ul {
		margin-left: 16px;
	}

	.toggle {
		width: 9px;
		height: 11px;
		background: var(--surface);

		svg {
			display: block;
			margin: 1px 0;
		}
	}

	.dots {
		width: 5px;
		height: 1px;
		margin-left: -3px;
		background: repeating-linear-gradient(90deg, #999 0 1px, transparent 1px 3px);

		&.long {
			width: 10px;
			margin-left: 4px;
		}
	}

	.selected {
		background: #6bbde6;
		color: #fff;
	}

	.muted {
		color: #777;
	}

	main {
		position: relative;
		display: flex;
		flex: 1;
		align-items: flex-start;
	}

	.properties {
		box-sizing: border-box;
		flex: none;
		width: 268px;
		margin: 5px 0 0 11px;
		border: 1px solid var(--line);
		background: var(--surface);
		font-size: 12px;

		h3 {
			display: flex;
			align-items: center;
			gap: 8px;
			height: 22px;
			padding-left: 15px;
			background: #e7e9e6;
			font-size: 13px;
		}

		h3 .caret {
			border-width: 6px 3px 0;
			border-top-color: #5c5f5c;
		}
	}

	.crumbs {
		display: flex;
		align-items: center;
		gap: 2px;
		height: 29px;
		padding: 0 8px 0 12px;

		a {
			padding: 2px 4px 0;
			border-bottom: 1px solid var(--accent);
			color: #0a8fd6;
			text-decoration: none;
		}
	}

	.preset {
		display: flex;
		align-items: center;
		gap: 10px;
		height: 22px;
		padding: 0 9px 7px 12px;

		.field {
			flex: 1;
			margin-right: -6px;
			padding-right: 5px;
		}

		select {
			flex: 1;
			padding-left: 8px;
		}
	}

	.field {
		box-sizing: border-box;
		display: flex;
		align-items: center;
		height: 22px;
		border: 1px solid #e0e2df;
		background: #fff;
	}

	.pick {
		flex: none;
		gap: 1px;
		width: 128px;

		&.full {
			width: 151px;
		}

		&.marked {
			outline-offset: -1px;
		}

		input {
			flex: 1;
			padding-left: 4px;
		}

		button {
			margin-right: 4px;
		}
	}

	.group {
		display: flex;
		flex-direction: column;
		gap: 4px;
		padding: 3px 10px 7px 16px;

		&.behavior {
			padding: 3px 16px 5px;
		}
	}

	.line {
		display: flex;
		align-items: center;
		gap: 4px;

		label,
		.label {
			flex: none;
			width: 85px;
		}
	}

	.choice {
		box-sizing: border-box;
		display: grid;
		place-items: center;
		width: 24px;
		height: 24px;
		border: 1px solid transparent;

		&.big {
			width: 32px;
			height: 32px;
		}

		&[aria-pressed="true"] {
			border-color: var(--accent);
			background: #e0eff6;
		}

		&.marked {
			outline-offset: -1px;
		}
	}

	.drill {
		width: 206px;
		height: 106px;
		margin-left: 28px;

		svg {
			display: block;
		}

		text {
			fill: #555;
			font: 11px "DejaVu Sans Condensed", sans-serif;
		}
	}

	.entry {
		position: absolute;
		right: 7px;
		bottom: 7px;
		display: flex;
		box-sizing: border-box;
		width: 49px;
		height: 22px;
		border: 1px solid #e0e2df;
		border-bottom: 2px solid var(--accent);
		background: #fff;

		input {
			width: 30px;
			padding-left: 2px;
		}

		button {
			display: grid;
			place-items: center;
			flex: 1;
			background: #eff1ee;
		}
	}

	.actions {
		display: flex;
		gap: 6px;
		padding: 9px 9px 7px 6px;
		font-size: 13px;

		button {
			box-sizing: border-box;
			width: 77px;
			height: 25px;
			border: 1px solid var(--line);
			border-radius: 3px;
		}

		.marked {
			width: 78px;
			margin-right: 3px;
			outline-offset: -2px;
		}

		.apply {
			display: grid;
			place-items: center;
			width: 25px;
		}
	}

	.scene {
		position: relative;
		z-index: 2;
		flex: none;
		overflow: visible;
		pointer-events: none;
	}

	.edges,
	.dims {
		fill: none;
	}

	.dims {
		stroke: #000090;

		text {
			fill: #1c1c84;
			stroke: none;
			font: 19px "Noto Sans", sans-serif;
		}
	}

	.leader {
		fill: none;
		stroke: #1e8fff;
	}

	.ring {
		fill: none;
		stroke: #b56c08;
		stroke-width: 4;
	}

	.value {
		position: absolute;
		z-index: 3;
		top: 208px;
		left: 602px;
		display: flex;
		width: 75px;
		height: 23px;
		background: #fff;
		font: 18px "Noto Sans", sans-serif;

		input {
			width: 48px;
			padding-left: 6px;
			box-sizing: border-box;
			background: linear-gradient(#cfe8f5, #cfe8f5) no-repeat 6px 0 / 10px 100%;
		}

		button {
			display: grid;
			place-items: center;
			flex: 1;
			background: #eff1ee;
		}

		.play {
			border-width: 6px 0 6px 9px;
		}
	}

	.step {
		position: absolute;
		z-index: 3;
		width: 33px;
		height: 33px;
		border: 2px solid #fff;
		border-radius: 50%;
		background: #666865;
		box-shadow: 0 1px 2px 1px #bbb;
		color: #fff;
		font: bold 20px/33px "Liberation Sans", sans-serif;
		text-align: center;
		transform: translate(-50%, -50%);
	}
</style>
